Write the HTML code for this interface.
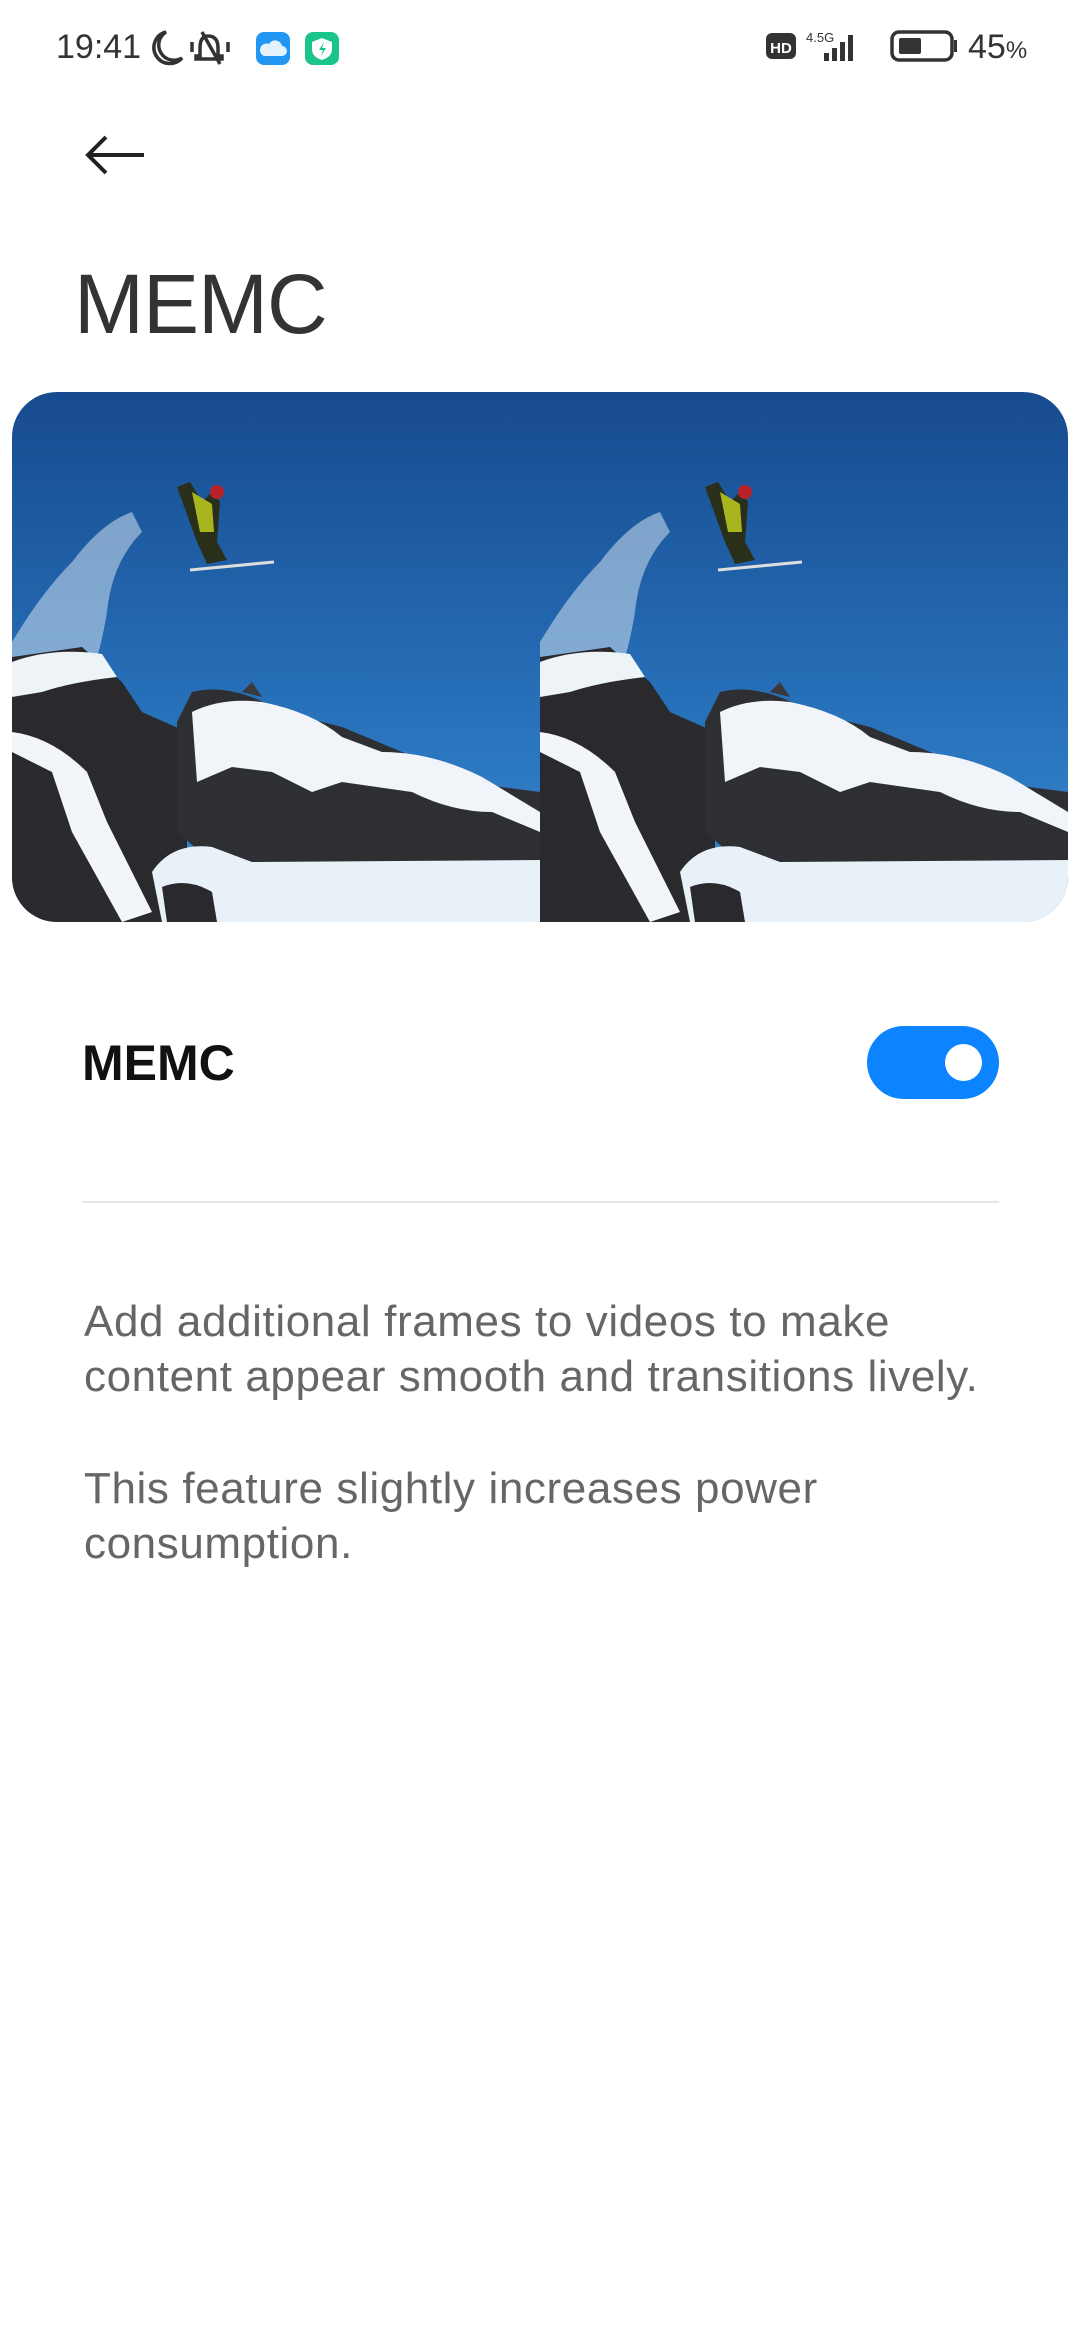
<!DOCTYPE html>
<html><head><meta charset="utf-8"><style>
body{margin:0;width:1080px;height:2340px;background:#fff;font-family:"Liberation Sans",sans-serif;position:relative;overflow:hidden}
.a{position:absolute}
</style></head><body>
<div class="a" style="left:56px;top:28px;font-size:34px;color:#333;">19:41</div>
<svg class="a" style="left:148px;top:28px" width="200" height="40" viewBox="0 0 200 40">
<path d="M18 4 A16 16 0 1 0 34 30 A14 14 0 0 1 18 4Z" fill="none" stroke="#333" stroke-width="3.5"/>
<path d="M60 8 q-8 0 -8 12 v8 h-4 v3 h26 v-3 h-4 v-8 q0 -12 -10 -12z M54 4 L72 36 M44 14 v10 M80 14 v10" fill="none" stroke="#333" stroke-width="3.5"/>
<rect x="108" y="4" width="34" height="33" rx="8" fill="#2196f3"/>
<path d="M116 28 h18 a5 5 0 0 0 0-10 a7 7 0 0 0 -13 -2 a6 6 0 0 0 -5 12z" fill="#e3f2fd"/>
<rect x="157" y="4" width="34" height="33" rx="8" fill="#1bc58a"/>
<path d="M174 10 l10 4 v7 q0 8 -10 11 q-10 -3 -10 -11 v-7z" fill="#fff"/>
<path d="M176 14 l-5 8 h4 l-2 6 5-8 h-4z" fill="#1bc58a"/>
</svg>
<svg class="a" style="left:764px;top:26px" width="270" height="40" viewBox="0 0 270 40">
<rect x="2" y="7" width="30" height="26" rx="6" fill="#333"/>
<text x="17" y="27" font-size="15" font-weight="bold" fill="#fff" text-anchor="middle" font-family="Liberation Sans">HD</text>
<text x="42" y="16" font-size="13" fill="#333" font-family="Liberation Sans">4.5G</text>
<rect x="60" y="27" width="5" height="8" fill="#333"/><rect x="68" y="22" width="5" height="13" fill="#333"/><rect x="76" y="16" width="5" height="19" fill="#333"/><rect x="84" y="9" width="5" height="26" fill="#333"/>
<rect x="128" y="6" width="60" height="28" rx="7" fill="none" stroke="#333" stroke-width="3.5"/>
<rect x="135" y="12" width="22" height="16" rx="2" fill="#333"/>
<rect x="190" y="14" width="3" height="12" fill="#333"/>
</svg>
<div class="a" style="left:968px;top:28px;font-size:34px;color:#333;">45<span style="font-size:24px">%</span></div>

<svg class="a" style="left:84px;top:134px" width="64" height="42" viewBox="0 0 64 42"><path d="M4 21 H60 M22 3 L4 21 L22 39" fill="none" stroke="#222" stroke-width="4"/></svg>
<div class="a" style="left:74px;top:256px;font-size:84px;color:#333;letter-spacing:-1px">MEMC</div>

<div class="a" style="left:12px;top:392px;width:1056px;height:530px;border-radius:45px;overflow:hidden">
<svg width="1056" height="530" viewBox="0 0 1056 530">
<defs>
<linearGradient id="sky" x1="0" y1="0" x2="0" y2="1"><stop offset="0" stop-color="#174a8e"/><stop offset="0.6" stop-color="#2771ba"/><stop offset="1" stop-color="#3a8bd0"/></linearGradient>
<g id="pic">
<rect width="528" height="530" fill="url(#sky)"/>
<path d="M0 250 Q30 200 60 170 Q90 130 120 120 L130 140 Q100 170 95 220 Q90 250 85 265 L0 275Z" fill="#cfe0ef" opacity="0.55"/>
<path d="M0 265 L70 255 L110 290 L130 320 L175 340 L175 530 L0 530Z" fill="#2a2a2e"/>
<path d="M0 270 Q40 255 90 262 L105 285 Q60 290 30 300 L0 305Z" fill="#eef3f8"/>
<path d="M0 340 Q40 345 75 380 L95 430 L140 520 L110 530 L60 440 L40 380 L0 360Z" fill="#f2f6fa"/>
<path d="M165 330 L180 300 Q220 290 270 320 L330 335 L390 360 L450 390 L528 400 L528 490 L430 480 L300 470 L200 470 L165 440Z" fill="#2e2f33"/>
<path d="M230 300 L240 290 L250 305Z" fill="#3a3a3e"/>
<path d="M180 320 Q210 305 250 310 Q300 320 330 345 L370 360 Q420 360 470 385 L528 420 L528 440 L480 420 Q440 420 400 400 L330 390 L300 400 L260 380 L220 375 L185 390Z" fill="#f1f5fa"/>
<path d="M140 480 Q160 450 200 455 L240 470 L528 468 L528 530 L150 530Z" fill="#e8f0f8"/>
<path d="M150 495 Q175 485 200 500 L205 530 L155 530Z" fill="#2a2a2e"/>
<path d="M165 95 L178 90 L190 110 L200 100 L208 110 L205 150 L215 168 L195 172 L185 150Z" fill="#2a2f1a"/>
<path d="M180 100 L200 112 L202 140 L188 140Z" fill="#a8b420"/>
<circle cx="205" cy="100" r="7" fill="#b8232a"/>
<path d="M178 178 L262 170" stroke="#ddd" stroke-width="3"/>
</g></defs>
<use href="#pic"/>
<use href="#pic" x="528"/>
</svg></div>

<div class="a" style="left:82px;top:1034px;font-size:50px;font-weight:bold;color:#111;">MEMC</div>
<div class="a" style="left:867px;top:1026px;width:132px;height:73px;border-radius:37px;background:#0d84ff"></div>
<div class="a" style="left:945px;top:1044px;width:37px;height:37px;border-radius:50%;background:#fff"></div>
<div class="a" style="left:82px;top:1201px;width:917px;height:2px;background:#e6e6e6"></div>
<div class="a" style="left:84px;top:1294px;width:905px;font-size:44px;letter-spacing:0.6px;line-height:55px;color:#666">Add additional frames to videos to make content appear smooth and transitions lively.</div>
<div class="a" style="left:84px;top:1461px;width:905px;font-size:44px;letter-spacing:0.6px;line-height:55px;color:#666">This feature slightly increases power consumption.</div>
</body></html>
